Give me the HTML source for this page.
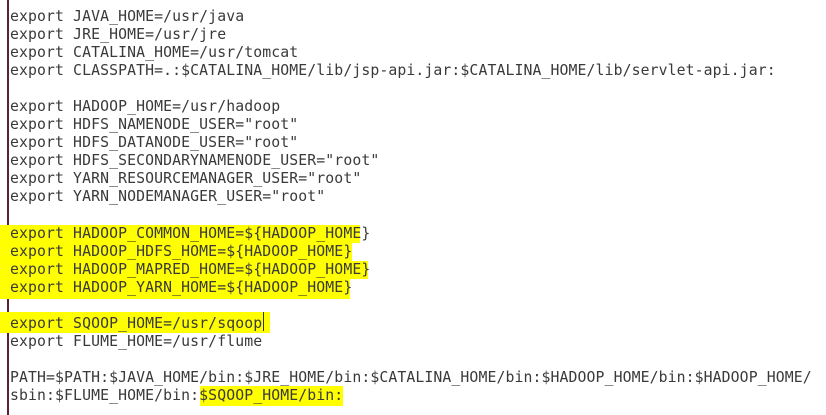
<!DOCTYPE html>
<html><head><style>
html,body{margin:0;padding:0;background:#fff;width:826px;height:415px;overflow:hidden}
.bar{position:absolute;left:7px;top:0;width:2px;height:415px;background:#5c2030}
.hl{position:absolute;background:#ffff00}
pre{position:absolute;left:10px;top:8px;margin:0;font-family:"DejaVu Sans Mono","Liberation Mono",monospace;font-size:14.8px;letter-spacing:0.1px;line-height:18.05px;color:#3a3a3a}
.cur{position:absolute;left:263px;top:312px;width:1px;height:19px;background:#333}
</style></head><body>
<div class="bar"></div>
<div class="hl" style="left:0;top:225px;width:360px;height:18px"></div>
<div class="hl" style="left:0;top:243px;width:352px;height:18px"></div>
<div class="hl" style="left:0;top:261px;width:368px;height:18px"></div>
<div class="hl" style="left:0;top:279px;width:350px;height:20px"></div>
<div class="hl" style="left:0;top:312px;width:270px;height:21px"></div>
<div class="hl" style="left:200px;top:386px;width:143px;height:20px"></div>
<pre>export JAVA_HOME=/usr/java
export JRE_HOME=/usr/jre
export CATALINA_HOME=/usr/tomcat
export CLASSPATH=.:$CATALINA_HOME/lib/jsp-api.jar:$CATALINA_HOME/lib/servlet-api.jar:

export HADOOP_HOME=/usr/hadoop
export HDFS_NAMENODE_USER="root"
export HDFS_DATANODE_USER="root"
export HDFS_SECONDARYNAMENODE_USER="root"
export YARN_RESOURCEMANAGER_USER="root"
export YARN_NODEMANAGER_USER="root"

export HADOOP_COMMON_HOME=${HADOOP_HOME}
export HADOOP_HDFS_HOME=${HADOOP_HOME}
export HADOOP_MAPRED_HOME=${HADOOP_HOME}
export HADOOP_YARN_HOME=${HADOOP_HOME}

export SQOOP_HOME=/usr/sqoop
export FLUME_HOME=/usr/flume

PATH=$PATH:$JAVA_HOME/bin:$JRE_HOME/bin:$CATALINA_HOME/bin:$HADOOP_HOME/bin:$HADOOP_HOME/
sbin:$FLUME_HOME/bin:$SQOOP_HOME/bin:</pre>
<div class="cur"></div>
</body></html>
